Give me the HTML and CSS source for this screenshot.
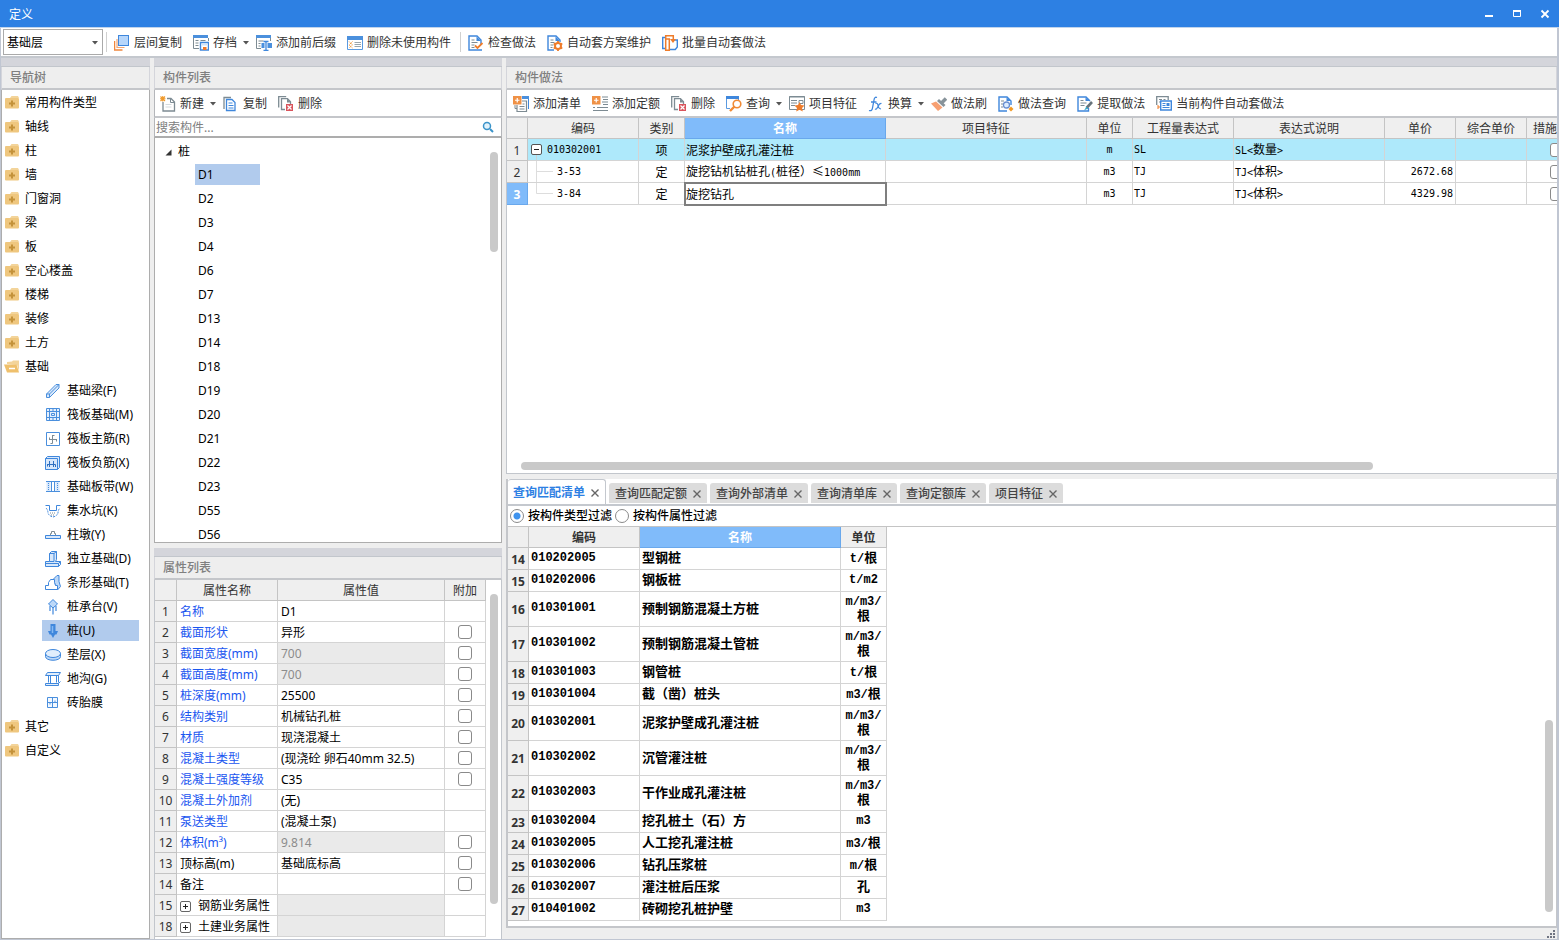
FILE: index.html
```html
<!DOCTYPE html>
<html lang="zh-CN">
<head>
<meta charset="utf-8">
<title>定义</title>
<link rel="stylesheet" href="styles.css">
</head>
<body>
<svg class="sprite" aria-hidden="true">
  <symbol id="folder" viewBox="0 0 16 16"><path d="M6 3l1.500-2h6.500l1 2z" fill="#f3d49a"/><rect x="1" y="3" width="14" height="10.500" rx="1" fill="#efc77f"/><path d="M8 5.500v6M5 8.500h6" stroke="#c4923a" stroke-width="2"/></symbol>
  <symbol id="folder-open" viewBox="0 0 16 16"><path d="M3 5V3l5-.5 1-1h6V12l-2-6z" fill="#f3d49a"/><path d="M0 5.500h12.500L15 13.500H3z" fill="#efc06c"/><path d="M5 9.500h6" stroke="#fff" stroke-width="1.500"/></symbol>
  <symbol id="caret" viewBox="0 0 6 4"><path d="M0 0h6L3 3.500z" fill="#555"/></symbol>
  <symbol id="close" viewBox="0 0 10 10"><path d="M1.500 1.500l7 7M8.500 1.500l-7 7" stroke="currentColor" stroke-width="1.400" fill="none"/></symbol>
  <symbol id="layers" viewBox="0 0 16 16"><path d="M.5 6v9h8" fill="none" stroke="#f0873e" stroke-width="1.500"/><path d="M3 4v8.500H10.500" fill="none" stroke="#f3a673" stroke-width="1.200"/><rect x="4.500" y=".5" width="10" height="10" fill="#b6d6fb" stroke="#3f87dc"/></symbol>
  <symbol id="archive" viewBox="0 0 16 16"><path d="M.5 3v10.500H6M15.500 3v3" stroke="#7d8b93" fill="none"/><path d="M0 0h15v3H0z" fill="#4b90dd"/><path d="M2.500 5.500h3M2.500 8h3M2.500 10.500h3M7.500 5.500h5" stroke="#7d8b93"/><path d="M7.500 7.500h8v7.500h-8z" fill="#fff" stroke="#3f87dc" stroke-width="1.400"/><path d="M9 8h5v2.500H9z" fill="#cfe2f8"/><path d="M10 12h3.500v3H10z" fill="#f0792a"/></symbol>
  <symbol id="affix" viewBox="0 0 16 16"><path d="M.5 3v10.500H5M14.500 3v3" stroke="#7d8b93" fill="none"/><path d="M0 0h15v3H0z" fill="#4b90dd"/><path d="M2.500 6h5M2.500 8.500h2M2.500 11h2" stroke="#7d8b93"/><path d="M5.500 8h3v5h-3zM11.500 8H16v5h-4.500z" fill="#4b90dd"/><path d="M7.500 6.500h5M10 6.500v9M7.500 15.500h5" stroke="#3f87dc" fill="none" stroke-width="1.300"/></symbol>
  <symbol id="unused" viewBox="0 0 16 16"><path d="M.5 3v11.500h15V3" fill="#fff" stroke="#5a9ae0"/><path d="M0 1h16v4H0z" fill="#4b90dd"/><path d="M2 6.500l3.500 3.500-3.500 3M5.500 6.500L2 10l3.500 3" fill="none" stroke="#f09a3c" stroke-dasharray="1.500 .7"/><path d="M7.500 7.500h6.500M7.500 9.500h6.500M7.500 11.500h6.500" stroke="#9aa5ab"/></symbol>
  <symbol id="doc-check" viewBox="0 0 16 16"><path d="M14 15H1V1h8l4 4v4" fill="#fff" stroke="#3f87dc" stroke-width="1.400"/><path d="M8.500 1.500V6H13z" fill="#3f87dc"/><path d="M3.500 5h3M3.500 7.500h6M3.500 10h3M3.500 12.500h3" stroke="#7d8b93"/><path d="M7 10.500l2.500 2.500 5-5" fill="none" stroke="#ee7c2b" stroke-width="1.800"/></symbol>
  <symbol id="doc-gear" viewBox="0 0 16 16"><path d="M7 15H1V1h8l4 4v2" fill="#fff" stroke="#3f87dc" stroke-width="1.400"/><path d="M8.500 1.500V6H13z" fill="#3f87dc"/><path d="M3.500 5h3M3.500 7.500h4M3.500 10h3M3.500 12.500h2" stroke="#7d8b93"/><circle cx="11" cy="11" r="3" fill="#fff" stroke="#ee7c2b" stroke-width="2"/><path d="M11 6v2M11 14v2M6.700 8.500l1.700 1M13.600 12.500l1.700 1M6.700 13.500l1.700-1M13.600 9.500l1.700-1" stroke="#ee7c2b" stroke-width="1.800"/></symbol>
  <symbol id="batch" viewBox="0 0 16 16"><path d="M3.500 2.500H.7v11h2.800M12 5h3.300v7l-2 2.500H7" fill="none" stroke="#3f87dc" stroke-width="1.400"/><path d="M3.700 4h3.600v11.300H3.700zM3.700 4V.7h7.600v4" fill="none" stroke="#ee7c2b" stroke-width="1.500"/><path d="M8 4h6l-3 4z" fill="#ee7c2b"/></symbol>
  <symbol id="new" viewBox="0 0 16 16"><path d="M3 6v9h11.500V6L11 2.500H7" fill="#fff" stroke="#7d8b93" stroke-width="1.300"/><path d="M10.500 3v3.500H14" fill="none" stroke="#7d8b93"/><path d="M5.500 8.500h6M5.500 11h6" stroke="#d5dade"/><path d="M.5.500l4.500 4.500M5 .5L.5 5M2.750 0v5.500M0 2.750h5.500" stroke="#f09a2c" stroke-width="1.100"/></symbol>
  <symbol id="copy" viewBox="0 0 16 16"><path d="M1 13V1.500h7" fill="none" stroke="#7d8b93" stroke-width="1.300"/><path d="M3.500 3.500h5.500l3 3v8h-8.500z" fill="#fff" stroke="#3f87dc" stroke-width="1.300"/><path d="M5.500 7h4M5.500 9.500h5M5.500 12h5" stroke="#3f87dc"/></symbol>
  <symbol id="delete" viewBox="0 0 16 16"><path d="M.7 11.500V.7h7.500" fill="none" stroke="#7d8b93" stroke-width="1.300"/><path d="M7 13.500H3.500V2.700h6l3 3V8" fill="#fff" stroke="#7d8b93" stroke-width="1.300"/><path d="M9 2.500V6.500H13z" fill="#7d8b93"/><path d="M8 8h7v7H8z" fill="#d9545c"/><path d="M9.500 9.500l4 4M13.500 9.500l-4 4" stroke="#fff" stroke-width="1.200"/></symbol>
  <symbol id="add-list" viewBox="0 0 16 16"><path d="M9 1.500h6.500V13" fill="none" stroke="#3f87dc"/><path d="M9 0h7v3H9z" fill="#4b90dd"/><path d="M4 9v6.500h9.500V5H9" fill="#fff" stroke="#7d8b93" stroke-width="1.200"/><path d="M2 9v3.500h2M6.500 10.500h5M6.500 13h5M9.500 8h2" stroke="#7d8b93" fill="none"/><path d="M0 0h8.500v8.500H0z" fill="#ef9146"/><path d="M4.250 2v4.500M2 4.250h4.500" stroke="#fff" stroke-width="1.200"/></symbol>
  <symbol id="add-quota" viewBox="0 0 16 16"><path d="M10 1h6M11 3.500h5M10 6h6M11 8.500h5M1 11.500h2M5 11.500h11M1 14.500h15" stroke="#7d8b93" stroke-width="1.200"/><path d="M0 0h8.500v8.500H0z" fill="#ef9146"/><path d="M4.250 2v4.500M2 4.250h4.500" stroke="#fff" stroke-width="1.200"/></symbol>
  <symbol id="query" viewBox="0 0 16 16"><path d="M.5 3v9.500H4M12.500 3v1" fill="none" stroke="#5a9ae0"/><path d="M0 0h13v3H0z" fill="#3f87dc"/><circle cx="11" cy="8" r="3.800" fill="#fff" stroke="#f08a35" stroke-width="1.600"/><path d="M8.500 10.500L4 15" stroke="#f08a35" stroke-width="2.400"/></symbol>
  <symbol id="feature" viewBox="0 0 16 16"><path d="M.5.500h15v13H.5z" fill="#fff" stroke="#7d8b93"/><path d="M0 1h16M2 4.500h6M2 7h6M2 9.500h4M10 4.500h4v3h-4z" fill="none" stroke="#7d8b93"/><path d="M10.500 6l1.500 3 3.500.500L13 12l.8 3.600-3.300-1.800-3.300 1.800L8 12 5.500 9.500 9 9z" fill="#ee7c2b"/></symbol>
  <symbol id="brush" viewBox="0 0 16 16"><path d="M15 2.500L10.500 7" stroke="#87939a" stroke-width="3.500"/><path d="M8 3l6.500 6-2 2L6 5z" fill="#87939a"/><path d="M5 5.500L0 7.500l7 7.500 4.500-3.500z" fill="#f7a072"/></symbol>
  <symbol id="doc-search" viewBox="0 0 16 16"><path d="M13 9V5L9 1H1v14h8" fill="#fff" stroke="#3f87dc" stroke-width="1.400"/><path d="M8.500 1.500V5H13z" fill="#3f87dc"/><path d="M3 5h3M3 8h2M3 11h2" stroke="#7d8b93"/><circle cx="8.500" cy="9" r="3" fill="#dcecff" stroke="#6a8fd0" stroke-width="1.300"/><path d="M10.500 13l2.500-2.500 2.500 2.500-2.500 2.500z" fill="#f39a24"/></symbol>
  <symbol id="doc-edit" viewBox="0 0 16 16"><path d="M13 5L9 1H1v14h10.500v-3" fill="#fff" stroke="#3f87dc" stroke-width="1.400"/><path d="M8.500 1.500V5H13z" fill="#3f87dc"/><path d="M3.500 4.500h3M3.500 7h6M3.500 9.500h4" stroke="#7d8b93"/><path d="M15 6l-5.500 6" stroke="#66737b" stroke-width="2.600"/><path d="M9.500 10.500L7 14.500l4-2z" fill="#35a9c8"/></symbol>
  <symbol id="auto" viewBox="0 0 16 16"><path d="M.7 9V.7h11.500V4" fill="none" stroke="#7d8b93" stroke-width="1.300"/><path d="M3 3.500h3M7.500 3.500h2M3 6h1" stroke="#7d8b93"/><path d="M1 10h2v2M3 12H1" stroke="#ee7c2b" fill="none"/><path d="M4.700 5h10.600v9H4.700z" fill="#fff" stroke="#3f87dc" stroke-width="1.400"/><path d="M6.500 7.500h3M6.500 9.500h3M6.500 11.500h7" stroke="#3f87dc"/><path d="M10.500 7h3v3h-3z" fill="#3f87dc"/></symbol>
  <symbol id="fx" viewBox="0 0 16 16"><path d="M9 1.500Q6.500.5 6 4L4.500 12Q4 15.500 1 14.500M3 6h5.500" fill="none" stroke="#3f87dc" stroke-width="1.300"/><path d="M7.500 7.500q2-1 2.500 2t3 3.500M13.500 7.500q-2-.5-3.500 3T7 13" fill="none" stroke="#3f87dc" stroke-width="1.200"/></symbol>
  <symbol id="beam" viewBox="0 0 16 16"><path d="M1.500 11L11 1.500h3V5L4.500 14.500h-3z" fill="#d8e8fb" stroke="#4a8fdd"/><path d="M1.500 11h3v3.500M4.500 11L14 1.500" fill="none" stroke="#4a8fdd"/></symbol>
  <symbol id="raft" viewBox="0 0 16 16"><path d="M1.500 1.500h13v12h-13zM4.500 4.500h7v6h-7zM1.500 4.500h13M1.500 10.500h13M4.500 1.500v12M11.500 1.500v12" fill="#e5f0fd" stroke="#4a8fdd"/><path d="M6.500 6.500h3v2h-3zM8 1.500v3M8 10.500v3" fill="none" stroke="#4a8fdd"/></symbol>
  <symbol id="main-bar" viewBox="0 0 16 16"><path d="M1.500 1.500h13v13h-13z" fill="#fff" stroke="#4a8fdd"/><path d="M7.500 4v8.500M4 8.500h8M7.500 4.500h2M7.500 12.500h-2M4.500 8.500v-2M11.500 8.500v2" fill="none" stroke="#7d8b93"/></symbol>
  <symbol id="neg-bar" viewBox="0 0 16 16"><path d="M.5 3.500h12v11H.5zM.5 3.500l2-2h12v11l-2 2" fill="#d8e8fb" stroke="#3f87dc"/><path d="M4.500 6v6M8.500 6v6M3 9.500h7.500M2.500 9v2.500M10.500 9.500v2.500" stroke="#2f6fc0" fill="none"/></symbol>
  <symbol id="strip" viewBox="0 0 16 16"><path d="M1.500 3v10h4V3zM10.500 3v10h4V3z" fill="#d8e8fb"/><path d="M1 2.500h14M1 12.500h14M6.500 2v11M9.500 2v11" stroke="#4a8fdd"/><path d="M3.500 4v8M12.500 4v8" stroke="#4a8fdd" stroke-dasharray="1 1"/></symbol>
  <symbol id="pit" viewBox="0 0 16 16"><path d="M.5 2.500h4v5h7v-5h4" fill="none" stroke="#3f87dc"/><path d="M1 5q2 2 2 5 1 3 5 4 4-1 5-4 0-3 2-5" fill="none" stroke="#3f87dc" stroke-dasharray="2 1"/><path d="M5 10h6M6 12h4" stroke="#7d8b93" stroke-dasharray="1 1"/></symbol>
  <symbol id="pier" viewBox="0 0 16 16"><path d="M.5 8.500h15v3H.5z" fill="#d8e8fb" stroke="#3f87dc"/><path d="M5.500 8.500v-2h1v-2h3v2h1v2" fill="none" stroke="#7d8b93"/></symbol>
  <symbol id="isolated" viewBox="0 0 16 16"><path d="M.5 10.500h4v-8l2-2h5v8l-1 2h5v3l-2 2H.5z" fill="#d8e8fb" stroke="#3f87dc"/><path d="M4.500 2.500h4.500v8h-4.500M9 2.500l2.500-2M.5 12.500h13l2-2M13.500 12.500v3" fill="none" stroke="#3f87dc"/></symbol>
  <symbol id="strip-base" viewBox="0 0 16 16"><path d="M8 4.500L12 .5h2v6l1.500 5-3 3.500z" fill="#bcd8f8" stroke="#3f87dc"/><path d="M.5 14.500v-4h3v-3l2-3h4v3l1 3h2v4z" fill="#fff" stroke="#3f87dc"/></symbol>
  <symbol id="cap" viewBox="0 0 16 16"><path d="M8 .5L12.500 5 8 9 3.500 5z" fill="#bcd8f8" stroke="#3f87dc"/><path d="M8 9v6.500M5 7v5M11 7v5" stroke="#3f87dc" stroke-width="1.200"/></symbol>
  <symbol id="pile" viewBox="0 0 16 16"><path d="M5.500 1h5v7H13l-1.500 3.500H10L8 15l-2-3.500H4.500L3 8h2.500z" fill="#3f87dc"/><path d="M7.500 3v7" stroke="#84b9f3" stroke-width="1.500"/></symbol>
  <symbol id="cushion" viewBox="0 0 16 16"><path d="M.5 6.500v3c0 5 15 5 15 0v-3z" fill="#bcd8f8" stroke="#3f87dc"/><ellipse cx="8" cy="6.500" rx="7.500" ry="4" fill="#e1eefc" stroke="#3f87dc"/></symbol>
  <symbol id="trench" viewBox="0 0 16 16"><path d="M.5 4.500l2-3h13l-2 3zM3.500 4.500v7M5.500 5v7M11.500 4.500v7M13.500 4.500v7M.5 14.500v-2h13v2zM13.500 12.500l2-2" fill="#e1eefc" stroke="#3f87dc"/></symbol>
  <symbol id="brick" viewBox="0 0 16 16"><path d="M2.500 2.500h10v10h-10zM7.500 2.500v10M2.500 7.500h10M5 7.500v2M10 7.500V5.500" fill="#f4f9ff" stroke="#4a8fdd"/></symbol>
  <symbol id="plus-box" viewBox="0 0 11 11"><rect x=".5" y=".5" width="10" height="10" rx="1.500" fill="#fff" stroke="#666"/><path d="M3 5.500h5M5.500 3v5" stroke="#222"/></symbol>
</svg>

<header class="titlebar">
  <h1 class="titlebar-name">定义</h1>
  <button class="win-btn" aria-label="最小化"><svg viewBox="0 0 10 10"><path d="M1 7h8" stroke="#fff" stroke-width="2"/></svg></button>
  <button class="win-btn" aria-label="最大化"><svg viewBox="0 0 10 10"><path d="M1.500 2.500h7v5h-7z" fill="none" stroke="#fff"/><path d="M1 2h8" stroke="#fff" stroke-width="2"/></svg></button>
  <button class="win-btn" aria-label="关闭"><svg viewBox="0 0 10 10"><path d="M1.500 1.500l7 7M8.500 1.500l-7 7" stroke="#fff" stroke-width="1.800"/></svg></button>
</header>

<main class="window">
  <div class="toolbar main-toolbar">
    <div class="floor-box">
      <select class="floor" aria-label="楼层"><option>基础层</option></select>
      <svg class="floor-caret caret"><use href="#caret"/></svg>
    </div>
    <span class="sep"></span>
    <button class="tool"><svg class="icon"><use href="#layers"/></svg>层间复制</button>
    <button class="tool drop"><svg class="icon"><use href="#archive"/></svg>存档<svg class="caret"><use href="#caret"/></svg></button>
    <button class="tool"><svg class="icon"><use href="#affix"/></svg>添加前后缀</button>
    <button class="tool"><svg class="icon"><use href="#unused"/></svg>删除未使用构件</button>
    <span class="sep"></span>
    <button class="tool"><svg class="icon"><use href="#doc-check"/></svg>检查做法</button>
    <button class="tool"><svg class="icon"><use href="#doc-gear"/></svg>自动套方案维护</button>
    <button class="tool"><svg class="icon"><use href="#batch"/></svg>批量自动套做法</button>
  </div>

  <div class="workspace">
    <section class="panel nav-panel">
      <div class="grip"></div>
      <h2 class="panel-title">导航树</h2>
      <ul class="nav">
        <li class="nav-item"><svg class="icon"><use href="#folder"/></svg>常用构件类型</li>
        <li class="nav-item"><svg class="icon"><use href="#folder"/></svg>轴线</li>
        <li class="nav-item"><svg class="icon"><use href="#folder"/></svg>柱</li>
        <li class="nav-item"><svg class="icon"><use href="#folder"/></svg>墙</li>
        <li class="nav-item"><svg class="icon"><use href="#folder"/></svg>门窗洞</li>
        <li class="nav-item"><svg class="icon"><use href="#folder"/></svg>梁</li>
        <li class="nav-item"><svg class="icon"><use href="#folder"/></svg>板</li>
        <li class="nav-item"><svg class="icon"><use href="#folder"/></svg>空心楼盖</li>
        <li class="nav-item"><svg class="icon"><use href="#folder"/></svg>楼梯</li>
        <li class="nav-item"><svg class="icon"><use href="#folder"/></svg>装修</li>
        <li class="nav-item"><svg class="icon"><use href="#folder"/></svg>土方</li>
        <li class="nav-item"><svg class="icon"><use href="#folder-open"/></svg>基础</li>
        <li>
          <ul class="subnav">
            <li class="sub-item"><svg class="icon"><use href="#beam"/></svg>基础梁(F)</li>
            <li class="sub-item"><svg class="icon"><use href="#raft"/></svg>筏板基础(M)</li>
            <li class="sub-item"><svg class="icon"><use href="#main-bar"/></svg>筏板主筋(R)</li>
            <li class="sub-item"><svg class="icon"><use href="#neg-bar"/></svg>筏板负筋(X)</li>
            <li class="sub-item"><svg class="icon"><use href="#strip"/></svg>基础板带(W)</li>
            <li class="sub-item"><svg class="icon"><use href="#pit"/></svg>集水坑(K)</li>
            <li class="sub-item"><svg class="icon"><use href="#pier"/></svg>柱墩(Y)</li>
            <li class="sub-item"><svg class="icon"><use href="#isolated"/></svg>独立基础(D)</li>
            <li class="sub-item"><svg class="icon"><use href="#strip-base"/></svg>条形基础(T)</li>
            <li class="sub-item"><svg class="icon"><use href="#cap"/></svg>桩承台(V)</li>
            <li class="sub-item selected"><svg class="icon"><use href="#pile"/></svg>桩(U)</li>
            <li class="sub-item"><svg class="icon"><use href="#cushion"/></svg>垫层(X)</li>
            <li class="sub-item"><svg class="icon"><use href="#trench"/></svg>地沟(G)</li>
            <li class="sub-item"><svg class="icon"><use href="#brick"/></svg>砖胎膜</li>
          </ul>
        </li>
        <li class="nav-item"><svg class="icon"><use href="#folder"/></svg>其它</li>
        <li class="nav-item"><svg class="icon"><use href="#folder"/></svg>自定义</li>
      </ul>
    </section>

    <div class="middle">
      <section class="panel list-panel">
        <div class="grip"></div>
        <h2 class="panel-title">构件列表</h2>
        <div class="toolbar sub-toolbar">
          <button class="tool drop"><svg class="icon"><use href="#new"/></svg>新建<svg class="caret"><use href="#caret"/></svg></button>
          <button class="tool"><svg class="icon"><use href="#copy"/></svg>复制</button>
          <button class="tool"><svg class="icon"><use href="#delete"/></svg>删除</button>
        </div>
        <div class="search">
          <input class="search-input" type="text" placeholder="搜索构件..." aria-label="搜索构件">
          <svg class="search-icon" viewBox="0 0 12 12"><circle cx="5" cy="5" r="3.500" fill="#e2f2fb" stroke="#3a93c9" stroke-width="1.500"/><path d="M8 8l3 3" stroke="#3a93c9" stroke-width="2"/></svg>
        </div>
        <div class="tree-box">
          <ul class="tree">
            <li class="tree-root"><svg class="arrow" viewBox="0 0 7 7"><path d="M6.500.5v6h-6z" fill="#333"/></svg>桩</li>
            <li class="leaf"><span class="leaf-name selected">D1</span></li>
            <li class="leaf"><span class="leaf-name">D2</span></li>
            <li class="leaf"><span class="leaf-name">D3</span></li>
            <li class="leaf"><span class="leaf-name">D4</span></li>
            <li class="leaf"><span class="leaf-name">D6</span></li>
            <li class="leaf"><span class="leaf-name">D7</span></li>
            <li class="leaf"><span class="leaf-name">D13</span></li>
            <li class="leaf"><span class="leaf-name">D14</span></li>
            <li class="leaf"><span class="leaf-name">D18</span></li>
            <li class="leaf"><span class="leaf-name">D19</span></li>
            <li class="leaf"><span class="leaf-name">D20</span></li>
            <li class="leaf"><span class="leaf-name">D21</span></li>
            <li class="leaf"><span class="leaf-name">D22</span></li>
            <li class="leaf"><span class="leaf-name">D23</span></li>
            <li class="leaf"><span class="leaf-name">D55</span></li>
            <li class="leaf"><span class="leaf-name">D56</span></li>
          </ul>
          <div class="gutter"><div class="thumb thumb-tree"></div></div>
        </div>
      </section>

      <section class="panel prop-panel">
        <div class="grip"></div>
        <h2 class="panel-title">属性列表</h2>
        <div class="prop-box">
          <table class="grid props">
            <colgroup><col class="w-no"><col class="w-name"><col class="w-value"><col class="w-extra"></colgroup>
            <thead><tr><th></th><th>属性名称</th><th>属性值</th><th>附加</th></tr></thead>
            <tbody>
              <tr><th>1</th><td class="link">名称</td><td>D1</td><td></td></tr>
              <tr><th>2</th><td class="link">截面形状</td><td>异形</td><td class="mid"><input type="checkbox" aria-label="附加 截面形状"></td></tr>
              <tr><th>3</th><td class="link">截面宽度(mm)</td><td class="off">700</td><td class="mid"><input type="checkbox" aria-label="附加 截面宽度"></td></tr>
              <tr><th>4</th><td class="link">截面高度(mm)</td><td class="off">700</td><td class="mid"><input type="checkbox" aria-label="附加 截面高度"></td></tr>
              <tr><th>5</th><td class="link">桩深度(mm)</td><td>25500</td><td class="mid"><input type="checkbox" aria-label="附加 桩深度"></td></tr>
              <tr><th>6</th><td class="link">结构类别</td><td>机械钻孔桩</td><td class="mid"><input type="checkbox" aria-label="附加 结构类别"></td></tr>
              <tr><th>7</th><td class="link">材质</td><td>现浇混凝土</td><td class="mid"><input type="checkbox" aria-label="附加 材质"></td></tr>
              <tr><th>8</th><td class="link">混凝土类型</td><td>(现浇砼 卵石40mm 32.5)</td><td class="mid"><input type="checkbox" aria-label="附加 混凝土类型"></td></tr>
              <tr><th>9</th><td class="link">混凝土强度等级</td><td>C35</td><td class="mid"><input type="checkbox" aria-label="附加 混凝土强度等级"></td></tr>
              <tr><th>10</th><td class="link">混凝土外加剂</td><td>(无)</td><td></td></tr>
              <tr><th>11</th><td class="link">泵送类型</td><td>(混凝土泵)</td><td></td></tr>
              <tr><th>12</th><td class="link">体积(m³)</td><td class="off">9.814</td><td class="mid"><input type="checkbox" aria-label="附加 体积"></td></tr>
              <tr><th>13</th><td>顶标高(m)</td><td>基础底标高</td><td class="mid"><input type="checkbox" aria-label="附加 顶标高"></td></tr>
              <tr><th>14</th><td>备注</td><td></td><td class="mid"><input type="checkbox" aria-label="附加 备注"></td></tr>
              <tr><th>15</th><td><span class="group"><svg class="box"><use href="#plus-box"/></svg>钢筋业务属性</span></td><td class="off"></td><td></td></tr>
              <tr><th>18</th><td><span class="group"><svg class="box"><use href="#plus-box"/></svg>土建业务属性</span></td><td class="off"></td><td></td></tr>
            </tbody>
          </table>
          <div class="gutter"><div class="thumb thumb-props"></div></div>
        </div>
      </section>
    </div>

    <div class="right">
      <section class="panel work-panel">
        <div class="grip"></div>
        <h2 class="panel-title">构件做法</h2>
        <div class="toolbar sub-toolbar">
          <button class="tool"><svg class="icon"><use href="#add-list"/></svg>添加清单</button>
          <button class="tool"><svg class="icon"><use href="#add-quota"/></svg>添加定额</button>
          <button class="tool"><svg class="icon"><use href="#delete"/></svg>删除</button>
          <button class="tool drop"><svg class="icon"><use href="#query"/></svg>查询<svg class="caret"><use href="#caret"/></svg></button>
          <button class="tool"><svg class="icon"><use href="#feature"/></svg>项目特征</button>
          <button class="tool drop"><svg class="icon"><use href="#fx"/></svg>换算<svg class="caret"><use href="#caret"/></svg></button>
          <button class="tool"><svg class="icon"><use href="#brush"/></svg>做法刷</button>
          <button class="tool"><svg class="icon"><use href="#doc-search"/></svg>做法查询</button>
          <button class="tool"><svg class="icon"><use href="#doc-edit"/></svg>提取做法</button>
          <button class="tool"><svg class="icon"><use href="#auto"/></svg>当前构件自动套做法</button>
        </div>
        <div class="work-box">
          <table class="grid works">
            <colgroup><col class="w-21"><col class="w-111"><col class="w-46"><col class="w-201"><col class="w-201"><col class="w-46"><col class="w-101"><col class="w-151"><col class="w-71"><col class="w-71"><col class="w-60"></colgroup>
            <thead><tr><th></th><th>编码</th><th>类别</th><th class="active">名称</th><th>项目特征</th><th>单位</th><th>工程量表达式</th><th>表达式说明</th><th>单价</th><th>综合单价</th><th class="cut">措施</th></tr></thead>
            <tbody>
              <tr class="current"><th>1</th><td class="code"><span class="node"><svg class="branch branch-root" viewBox="0 0 19 21"><path d="M8.500 15v6" stroke="#c8d4d8"/><rect x="3.500" y="5.500" width="10" height="10" rx="1.500" fill="#fff" stroke="#555"/><path d="M6 10.500h5" stroke="#222"/></svg><span class="mono">010302001</span></span></td><td class="mid">项</td><td>泥浆护壁成孔灌注桩</td><td></td><td class="mid mono">m</td><td class="mono">SL</td><td><span class="mono">SL&lt;</span>数量<span class="mono">&gt;</span></td><td></td><td></td><td class="mid"><input type="checkbox" aria-label="措施 1"></td></tr>
              <tr><th>2</th><td class="code"><span class="node"><svg class="branch" viewBox="0 0 29 21"><path d="M8.500 0v21M8.500 10.500H25" fill="none" stroke="#ddd"/></svg><span class="mono">3-53</span></span></td><td class="mid">定</td><td>旋挖钻机钻桩孔<span class="mono">(</span>桩径）≤<span class="mono">1000mm</span></td><td></td><td class="mid mono">m3</td><td class="mono">TJ</td><td><span class="mono">TJ&lt;</span>体积<span class="mono">&gt;</span></td><td class="num mono">2672.68</td><td></td><td class="mid"><input type="checkbox" aria-label="措施 2"></td></tr>
              <tr><th class="active">3</th><td class="code"><span class="node"><svg class="branch" viewBox="0 0 29 21"><path d="M8.500 0v10.500H25" fill="none" stroke="#ddd"/></svg><span class="mono">3-84</span></span></td><td class="mid">定</td><td class="focus">旋挖钻孔</td><td></td><td class="mid mono">m3</td><td class="mono">TJ</td><td><span class="mono">TJ&lt;</span>体积<span class="mono">&gt;</span></td><td class="num mono">4329.98</td><td></td><td class="mid"><input type="checkbox" aria-label="措施 3"></td></tr>
            </tbody>
          </table>
          <div class="h-gutter"><div class="thumb thumb-h"></div></div>
        </div>
      </section>

      <section class="query-panel">
        <div class="tabs" role="tablist">
          <button class="tab on" role="tab" aria-selected="true">查询匹配清单<svg class="tab-x"><use href="#close"/></svg></button>
          <button class="tab" role="tab">查询匹配定额<svg class="tab-x"><use href="#close"/></svg></button>
          <button class="tab" role="tab">查询外部清单<svg class="tab-x"><use href="#close"/></svg></button>
          <button class="tab" role="tab">查询清单库<svg class="tab-x"><use href="#close"/></svg></button>
          <button class="tab" role="tab">查询定额库<svg class="tab-x"><use href="#close"/></svg></button>
          <button class="tab" role="tab">项目特征<svg class="tab-x"><use href="#close"/></svg></button>
        </div>
        <div class="filters">
          <label class="filter"><input type="radio" name="filter" checked>按构件类型过滤</label>
          <label class="filter"><input type="radio" name="filter">按构件属性过滤</label>
        </div>
        <div class="match-box">
          <table class="grid matches">
            <colgroup><col class="w-21"><col class="w-111"><col class="w-201"><col class="w-46"></colgroup>
            <thead><tr><th></th><th>编码</th><th class="active">名称</th><th>单位</th></tr></thead>
            <tbody>
              <tr><th>14</th><td class="mono">010202005</td><td>型钢桩</td><td class="unit"><span class="mono">t/</span>根</td></tr>
              <tr><th>15</th><td class="mono">010202006</td><td>钢板桩</td><td class="unit mono">t/m2</td></tr>
              <tr class="tall"><th>16</th><td class="mono">010301001</td><td>预制钢筋混凝土方桩</td><td class="unit"><span class="mono">m/m3/</span><br>根</td></tr>
              <tr class="tall"><th>17</th><td class="mono">010301002</td><td>预制钢筋混凝土管桩</td><td class="unit"><span class="mono">m/m3/</span><br>根</td></tr>
              <tr><th>18</th><td class="mono">010301003</td><td>钢管桩</td><td class="unit"><span class="mono">t/</span>根</td></tr>
              <tr><th>19</th><td class="mono">010301004</td><td>截（凿）桩头</td><td class="unit"><span class="mono">m3/</span>根</td></tr>
              <tr class="tall"><th>20</th><td class="mono">010302001</td><td>泥浆护壁成孔灌注桩</td><td class="unit"><span class="mono">m/m3/</span><br>根</td></tr>
              <tr class="tall"><th>21</th><td class="mono">010302002</td><td>沉管灌注桩</td><td class="unit"><span class="mono">m/m3/</span><br>根</td></tr>
              <tr class="tall"><th>22</th><td class="mono">010302003</td><td>干作业成孔灌注桩</td><td class="unit"><span class="mono">m/m3/</span><br>根</td></tr>
              <tr><th>23</th><td class="mono">010302004</td><td>挖孔桩土（石）方</td><td class="unit mono">m3</td></tr>
              <tr><th>24</th><td class="mono">010302005</td><td>人工挖孔灌注桩</td><td class="unit"><span class="mono">m3/</span>根</td></tr>
              <tr><th>25</th><td class="mono">010302006</td><td>钻孔压浆桩</td><td class="unit"><span class="mono">m/</span>根</td></tr>
              <tr><th>26</th><td class="mono">010302007</td><td>灌注桩后压浆</td><td class="unit">孔</td></tr>
              <tr><th>27</th><td class="mono">010401002</td><td>砖砌挖孔桩护壁</td><td class="unit mono">m3</td></tr>
            </tbody>
          </table>
          <div class="gutter match-gutter"><div class="thumb thumb-match"></div></div>
        </div>
      </section>
      <footer class="status"><svg class="resize" viewBox="0 0 8 8"><path d="M6 0h2v2H6zM3 3h2v2H3zM6 3h2v2H6zM0 6h2v2H0zM3 6h2v2H3zM6 6h2v2H6z" fill="#6f7482"/></svg></footer>
    </div>
  </div>
</main>
</body>
</html>
```

FILE: styles.css
```css
* { box-sizing: border-box; }

body {
  margin: 0;
  height: 100vh;
  display: flex;
  flex-direction: column;
  overflow: hidden;
  background: #eee;
  color: #000;
  font: 12px/16px "Noto Sans", "Noto Sans CJK SC", sans-serif;
}

ul { margin: 0; padding: 0; list-style: none; }
svg { display: block; flex: none; }
button, input, select { font: inherit; color: inherit; }
button { margin: 0; border: 0; background: none; white-space: nowrap; }

.sprite { position: absolute; width: 0; height: 0; }
.icon { width: 16px; height: 16px; }
.caret { width: 6px; height: 4px; }

/* Title bar */
.titlebar {
  flex: none;
  display: flex;
  height: 28px;
  align-items: center;
  background: #2d80e3;
  border-bottom: 1px solid #c0d4ec;
  color: #fff;
}
.titlebar-name { flex: 1; margin: 0; padding: 2px 0 0 9px; font-size: 12px; font-weight: 400; }
.win-btn { width: 28px; height: 27px; padding: 0 9px; }
.win-btn svg { width: 10px; height: 10px; }

.window {
  flex: 1;
  min-height: 0;
  display: flex;
  flex-direction: column;
  border: solid #c0c6d2;
  border-width: 0 2px 1px 1px;
}

/* Toolbars */
.toolbar { flex: none; display: flex; align-items: center; background: #fff; overflow: hidden; }
.main-toolbar { height: 30px; padding-left: 2px; border-bottom: 2px solid #c4c8ce; }
.sub-toolbar { height: 28px; border-bottom: 2px solid #c4c6ca; }
.tool {
  display: flex;
  flex: none;
  align-items: center;
  gap: 4px;
  height: 22px;
  margin-right: 1px;
  padding: 2px 5px 0;
  color: #333;
}
.tool.drop { padding-right: 1px; }
.tool .caret { margin-left: 2px; }
.sep { width: 1px; height: 20px; margin: 0 2px 0 3px; background: #d0d0d0; }
.floor-box { position: relative; width: 100px; }
.floor {
  display: block;
  width: 100%;
  height: 26px;
  padding: 2px 3px 0;
  appearance: none;
  border: 1px solid #aaa;
  border-radius: 0;
  background: #fff;
}
.floor-caret { position: absolute; right: 5px; top: 12px; }

/* Panels */
.workspace {
  flex: 1;
  min-height: 0;
  display: grid;
  grid-template-columns: 149px 348px minmax(0, 1fr);
  gap: 4px;
}
.panel { display: flex; flex-direction: column; min-height: 0; overflow: hidden; }
.grip { flex: none; height: 9px; background: #d4d5db; border-bottom: 1px solid #c2c6cc; }
.panel-title {
  flex: none;
  height: 23px;
  margin: 0;
  padding: 2px 8px 0;
  border: 1px solid #d4d5db;
  border-width: 0 1px 2px;
  border-bottom-color: #c4c6ca;
  background: #eee;
  color: #7f7f7f;
  font-size: 12px;
  line-height: 18px;
  font-weight: 500;
}
.middle { display: grid; grid-template-rows: 485fr 391fr; gap: 5px; min-height: 0; }
.right { display: grid; grid-template-rows: 416fr 5px 449fr 11px; min-height: 0; }
.query-panel { grid-row: 3; }

/* Navigation tree */
.nav { flex: 1; padding-top: 1px; border: 1px solid #adadad; border-width: 0 1px 1px; background: #fff; overflow: hidden; }
.nav-item { display: flex; align-items: center; gap: 5px; height: 24px; padding-left: 2px; }
.subnav { display: flex; flex-direction: column; gap: 3px; padding: 1px 0 2px 40px; }
.sub-item { display: flex; align-items: center; gap: 6px; width: 97px; height: 21px; padding-left: 3px; white-space: nowrap; }
.selected { background: #b1cbed; }

/* Component list */
.list-panel .toolbar, .search { border-left: 1px solid #b4b6ba; border-right: 1px solid #b4b6ba; }
.search { flex: none; display: flex; align-items: center; height: 20px; background: #fff; border-bottom: 2px solid #adadad; padding-right: 7px; }
.search-input { flex: 1; height: 18px; padding: 0 1px; border: 0; outline: 0; background: none; }
.search-input::placeholder { color: #808080; }
.search-icon { width: 12px; height: 12px; }
.tree-box { flex: 1; min-height: 0; display: flex; background: #fff; border: 1px solid #adadad; border-top: 0; overflow: hidden; }
.tree { flex: 1; padding-top: 1px; }
.tree-root { display: flex; align-items: center; gap: 6px; height: 24px; padding: 2px 0 0 10px; }
.arrow { width: 7px; height: 7px; }
.leaf { height: 24px; padding: 1px 0 2px 40px; }
.leaf-name { display: block; width: 65px; height: 21px; padding-left: 3px; line-height: 21px; }

/* Scroll bars */
.gutter { flex: none; width: 15px; padding: 14px 3px 0 4px; background: #fff; }
.thumb { background: #c9c9c9; border-radius: 4px; }
.thumb-tree { height: 100px; }
.thumb-props { height: 310px; }
.thumb-match { height: 192px; }
.thumb-h { width: 83%; height: 8px; }
.h-gutter { margin-top: auto; padding: 0 10px 3px 14px; }

/* Grids */
.grid { flex: none; border-collapse: separate; border-spacing: 0; table-layout: fixed; background: #fff; }
.grid th, .grid td { padding: 0 3px; border: solid #d4d4d4; border-width: 0 1px 1px 0; white-space: nowrap; text-align: left; font-weight: 400; overflow: hidden; }
.grid th { height: 21px; padding: 2px 0 0; border-color: #c4c4c4; background: #efefef; color: #333; text-align: center; }
.grid th.active { background: #80bbfa; border-color: #69a8ec; color: #fff; font-weight: 700; }
.grid td.mid { padding: 0; text-align: center; }
.w-no { width: 22px; }
.w-name { width: 101px; }
.w-value { width: 167px; }
.w-extra { width: 41px; }
.w-21 { width: 21px; }
.w-46 { width: 46px; }
.w-60 { width: 60px; }
.w-71 { width: 71px; }
.w-101 { width: 101px; }
.w-111 { width: 111px; }
.w-151 { width: 151px; }
.w-201 { width: 201px; }

input[type="checkbox"] {
  display: block;
  width: 14px;
  height: 14px;
  margin: 0 auto;
  appearance: none;
  border: 1px solid #8a8a8a;
  border-radius: 3px;
  background: #fff;
}

.prop-box { flex: 1; min-height: 0; display: flex; border: 1px solid #c2c6cc; border-width: 0 1px; background: #fff; overflow: hidden; }
.props { width: 331px; align-self: flex-start; }
.props td { height: 21px; padding-top: 2px; }
.grid td.link { color: #1a56f0; }
.grid td.off { background: #eaeaea; color: #8c8c8c; }
.group { display: flex; align-items: center; gap: 7px; }
.box { width: 11px; height: 11px; }

.work-panel .toolbar { border-left: 1px solid #c4c6ca; padding-left: 1px; }
.work-box { flex: 1; min-height: 0; display: flex; flex-direction: column; background: #fff; border: 1px solid #c2c6cc; border-top: 0; border-right: 0; overflow: hidden; }
.works { width: 1080px; font-family: "Noto Sans CJK SC", sans-serif; }
.works th { font-family: "Noto Sans", "Noto Sans CJK SC", sans-serif; }
.works td { height: 22px; padding: 0 1px; }
.works .mono { font-family: "DejaVu Sans Mono", monospace; font-size: 10px; }
.works td.num { padding-right: 2px; text-align: right; }
.works th.cut { padding-left: 6px; text-align: left; }
.works td.code { padding: 0; }
.current td { background: #aee9fb; }
.node { display: flex; align-items: center; }
.branch { width: 29px; height: 21px; }
.branch-root { width: 19px; }
.works td.focus { outline: 2px solid #7f7f7f; outline-offset: -1px; }

/* Query tabs */
.query-panel { display: flex; flex-direction: column; min-height: 0; border: solid #c4c6ca; border-width: 0 1px 2px 2px; background: #fff; }
.tabs { flex: none; display: flex; align-items: flex-end; gap: 3px; height: 27px; border-bottom: 2px solid #c4c8ce; }
.tab {
  display: flex;
  align-items: center;
  gap: 5px;
  height: 20px;
  margin-bottom: 1px;
  padding: 2px 5px 0 6px;
  border-radius: 3px 3px 0 0;
  background: #dcdcdc;
  color: #444;
  font-weight: 500;
}
.tab.on { height: 25px; margin-bottom: 0; padding: 2px 5px 0; border: 1px solid #c4c8ce; border-width: 1px 1px 0 0; background: #fff; color: #2d80e3; font-weight: 700; }
.tab-x { width: 10px; height: 10px; color: #666; }
.filters { flex: none; display: flex; align-items: center; gap: 3px; height: 21px; padding-left: 2px; border-bottom: 1px solid #c4c4c4; }
.filter { display: flex; align-items: center; gap: 4px; font-weight: 500; }
input[type="radio"] {
  width: 14px;
  height: 14px;
  margin: 0;
  appearance: none;
  border: 1px solid #8a8a8a;
  border-radius: 50%;
  background: #fff;
}
input[type="radio"]:checked { background: radial-gradient(circle, #3f93ee 0 3px, #fff 4px); }
.match-box { flex: 1; min-height: 0; display: flex; justify-content: space-between; overflow: hidden; }
.matches { width: 379px; align-self: flex-start; }
.matches td { height: 22px; padding: 0 3px 2px 2px; font-family: "Liberation Sans", "Noto Sans CJK SC", sans-serif; font-size: 13px; line-height: 15px; font-weight: 700; }
.matches tbody th, .matches thead th { font-weight: 700; }
.matches .mono { font-family: "Liberation Mono", monospace; font-size: 12px; line-height: 12px; }
.matches .tall td { height: 35px; }
.grid td.unit { padding: 0 0 2px; text-align: center; }
.match-gutter { align-self: flex-end; padding: 0 3px 14px 4px; }

.status { grid-row: 4; display: flex; justify-content: flex-end; align-items: center; padding-right: 2px; background: #eee; }
.resize { width: 8px; height: 8px; }
```
